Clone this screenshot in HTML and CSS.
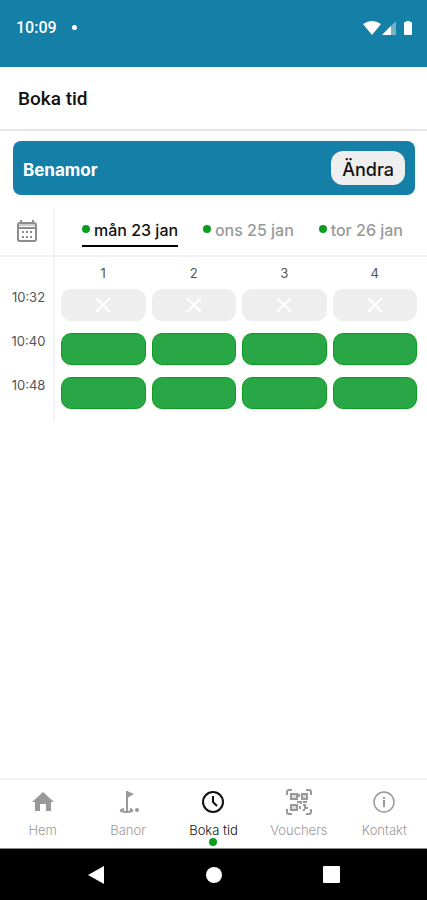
FILE: index.html
```html
<!DOCTYPE html>
<html lang="sv">
<head>
    <meta charset="UTF-8">
    <meta name="viewport" content="width=device-width, initial-scale=1.0">
    <title>Boka tid</title>
    <link rel="stylesheet" href="styles.css">
</head>
<body>
    <div class="status-bar">
        <span class="clock">10:09</span>
        <span class="notification-dot"></span>
        <svg class="status-icons" width="50" height="16" viewBox="0 0 50 16" fill="#fff" aria-hidden="true">
            <path d="M0 4Q9-2 18 4L9 15z"/>
            <path d="M33 1V15H19z" opacity="0.4"/>
            <path d="M28 6V15H19z"/>
            <path d="M43 1h4v1h1q1 0 1 1v11q0 1-1 1h-6q-1 0-1-1V3q0-1 1-1h1z"/>
        </svg>
    </div>

    <header class="title-bar">
        <h1>Boka tid</h1>
    </header>

    <main>
        <section class="course-card">
            <h2>Benamor</h2>
            <button type="button" class="change-button">Ändra</button>
        </section>

        <div class="date-bar">
            <button type="button" class="calendar-button" aria-label="Välj datum">
                <svg width="22" height="24" viewBox="0 0 22 24" fill="none" stroke="#8c8c8c" stroke-width="2">
                    <rect x="2" y="4" width="18" height="18" rx="2"/>
                    <path d="M3 6h16" stroke="#ccc"/>
                    <path d="M2 9h18"/>
                    <path d="M5 1v4M17 1v4"/>
                    <path d="M6 13h2m2 0h2m2 0h2M6 18h2m2 0h2m2 0h2"/>
                </svg>
            </button>
            <nav class="dates">
                <a href="#" class="date active">mån 23 jan</a>
                <a href="#" class="date">ons 25 jan</a>
                <a href="#" class="date">tor 26 jan</a>
            </nav>
        </div>

        <table class="tee-times">
            <thead>
                <tr><td class="time"></td><th>1</th><th>2</th><th>3</th><th>4</th></tr>
            </thead>
            <tbody>
                <tr>
                    <th class="time">10:32</th>
                    <td><button type="button" class="slot" disabled aria-label="10:32 plats 1"><svg width="16" height="16" viewBox="0 0 16 16"><path d="M1 1l14 14M15 1L1 15"/></svg></button></td>
                    <td><button type="button" class="slot" disabled aria-label="10:32 plats 2"><svg width="16" height="16" viewBox="0 0 16 16"><path d="M1 1l14 14M15 1L1 15"/></svg></button></td>
                    <td><button type="button" class="slot" disabled aria-label="10:32 plats 3"><svg width="16" height="16" viewBox="0 0 16 16"><path d="M1 1l14 14M15 1L1 15"/></svg></button></td>
                    <td><button type="button" class="slot" disabled aria-label="10:32 plats 4"><svg width="16" height="16" viewBox="0 0 16 16"><path d="M1 1l14 14M15 1L1 15"/></svg></button></td>
                </tr>
                <tr>
                    <th class="time">10:40</th>
                    <td><button type="button" class="slot" aria-label="10:40 plats 1"></button></td>
                    <td><button type="button" class="slot" aria-label="10:40 plats 2"></button></td>
                    <td><button type="button" class="slot" aria-label="10:40 plats 3"></button></td>
                    <td><button type="button" class="slot" aria-label="10:40 plats 4"></button></td>
                </tr>
                <tr>
                    <th class="time">10:48</th>
                    <td><button type="button" class="slot" aria-label="10:48 plats 1"></button></td>
                    <td><button type="button" class="slot" aria-label="10:48 plats 2"></button></td>
                    <td><button type="button" class="slot" aria-label="10:48 plats 3"></button></td>
                    <td><button type="button" class="slot" aria-label="10:48 plats 4"></button></td>
                </tr>
            </tbody>
        </table>
    </main>

    <nav class="tab-bar">
        <a href="#" class="tab">
            <svg width="28" height="28" viewBox="0 0 28 28" fill="currentColor"><path d="M14 4l11 10h-3v9h-5v-7h-6v7H6v-9H3z"/></svg>
            Hem
        </a>
        <a href="#" class="tab">
            <svg width="28" height="28" viewBox="0 0 28 28" fill="none" stroke="currentColor" stroke-width="2"><path d="M13 23V3"/><path d="M13 3l7 3-7 4z" fill="currentColor" stroke="none"/><path d="M10 21q-4 1-3 2 6 2 11 0 1-1-2-2"/><circle cx="23" cy="22" r="2" fill="currentColor" stroke="none"/></svg>
            Banor
        </a>
        <a href="#" class="tab active">
            <svg width="28" height="28" viewBox="0 0 28 28" fill="none" stroke="currentColor" stroke-width="2"><circle cx="14" cy="14" r="10"/><path d="M14 8v6l4 4"/></svg>
            Boka tid
        </a>
        <a href="#" class="tab">
            <svg width="28" height="28" viewBox="0 0 28 28" fill="none" stroke="currentColor" stroke-width="2">
                <path d="M2 7V4q0-2 2-2h3M21 2h3q2 0 2 2v3M26 21v3q0 2-2 2h-3M7 26H4q-2 0-2-2v-3"/>
                <path d="M6 6h6v5H6zM17 6h5v5h-5zM6 17h6v5H6z" fill="#ddd"/>
                <path d="M14 6v3M12 14h4v2M18 14h4M15 18v3M18 17h2v3h3M18 22h2"/>
            </svg>
            Vouchers
        </a>
        <a href="#" class="tab">
            <svg width="28" height="28" viewBox="0 0 28 28" fill="none" stroke="currentColor" stroke-width="1.5"><circle cx="14" cy="14" r="10"/><path d="M14 12v7M14 9v2" stroke-width="2"/></svg>
            Kontakt
        </a>
    </nav>

    <div class="system-bar">
        <button type="button" aria-label="Tillbaka"><svg width="18" height="20" viewBox="0 0 18 20"><path d="M17 1v18L1 10z"/></svg></button>
        <button type="button" aria-label="Hem"><svg width="18" height="18" viewBox="0 0 18 18"><circle cx="9" cy="9" r="8"/></svg></button>
        <button type="button" aria-label="Översikt"><svg width="18" height="18" viewBox="0 0 18 18"><rect width="17" height="17" rx="1"/></svg></button>
    </div>
</body>
</html>
```
FILE: styles.css
```css
* {
    box-sizing: border-box;
}
body {
    margin: 0;
    min-height: 100vh;
    display: flex;
    flex-direction: column;
    background-color: #fff;
    font-family: Inter, "Liberation Sans", sans-serif;
}
button {
    border: none;
    padding: 0;
    background: none;
    font-family: inherit;
    cursor: pointer;
}
a {
    text-decoration: none;
}
svg {
    display: block;
}

/* Top */
.status-bar {
    display: flex;
    align-items: center;
    height: 67px;
    padding: 0 14px 12px 16px;
    background-color: #147fa7;
    color: #fff;
}
.clock {
    font: 500 16px Roboto, sans-serif;
}
.notification-dot {
    width: 5px;
    height: 5px;
    margin-left: 15px;
    border-radius: 50%;
    background-color: #fff;
}
.status-icons {
    margin-left: auto;
}
.title-bar {
    display: flex;
    align-items: center;
    height: 64px;
    padding: 0 18px;
    border-bottom: 2px solid #e6e6e6;
}
.title-bar h1 {
    margin: 0;
    color: #111;
    font: 500 19px Roboto, sans-serif;
}

main {
    flex: 1;
}
.course-card {
    display: flex;
    align-items: center;
    justify-content: space-between;
    height: 54px;
    margin: 10px 12px 12px 13px;
    padding: 0 10px;
    border-radius: 8px;
    background-color: #147fa7;
}
.course-card h2 {
    margin: 0;
    padding-top: 4px;
    color: #fff;
    font-size: 17px;
    font-weight: 700;
}
.change-button {
    height: 34px;
    padding: 2px 11px 0;
    border-radius: 12px;
    background-color: #eee;
    color: #111;
    font-size: 18px;
    font-weight: 500;
}

/* Date picker */
.date-bar {
    display: flex;
    height: 50px;
    border-bottom: 2px solid #f3f3f3;
}
.calendar-button {
    display: flex;
    align-items: center;
    justify-content: center;
    width: 55px;
    border-right: 2px solid #f3f3f3;
}
.dates {
    display: flex;
    flex: 1;
    align-items: center;
    justify-content: space-between;
    padding: 0 24px 0 27px;
}
.date {
    display: flex;
    align-items: center;
    gap: 4px;
    height: 32px;
    border-bottom: 2px solid transparent;
    color: #999;
    font-size: 16px;
    font-weight: 500;
    white-space: nowrap;
}
.date::before {
    content: "";
    width: 8px;
    height: 8px;
    margin-bottom: 3px;
    border-radius: 50%;
    background-color: #0a9e20;
}
.date.active {
    border-color: #000;
    color: #111;
}

/* Tee times */
.tee-times,
.tee-times thead,
.tee-times tbody {
    display: block;
}
.tee-times tr {
    display: grid;
    grid-template-columns: 55px repeat(4, 1fr);
    column-gap: 6px;
    padding-right: 10px;
}
.tee-times th,
.tee-times td {
    padding: 0;
    color: #555;
    font-size: 13px;
    font-weight: 400;
    line-height: 16px;
}
.tee-times thead th {
    height: 32px;
    padding-top: 8px;
}
.tee-times tbody tr {
    height: 44px;
}
.tee-times .time {
    padding-left: 4px;
    border-right: 2px solid #f3f3f3;
}
.slot {
    display: flex;
    align-items: center;
    justify-content: center;
    width: 100%;
    height: 32px;
    border: 1px solid #0a9e20;
    border-radius: 10px;
    background-color: #29a746;
}
.slot:disabled {
    border-color: #eee;
    background-color: #eee;
    cursor: default;
}
.slot svg {
    stroke: #fff;
    stroke-width: 2;
}

/* Bottom */
.tab-bar {
    display: grid;
    grid-template-columns: repeat(5, 1fr);
    height: 71px;
    border-top: 2px solid #f3f3f3;
    border-bottom: 1px solid #888;
}
.tab {
    position: relative;
    display: flex;
    flex-direction: column;
    align-items: center;
    gap: 6px;
    padding-top: 8px;
    color: #999;
    font-size: 13px;
    font-weight: 300;
    line-height: 16px;
    white-space: nowrap;
}
.tab.active {
    color: #111;
}
.tab.active::after {
    content: "";
    position: absolute;
    bottom: 2px;
    width: 8px;
    height: 8px;
    border-radius: 50%;
    background-color: #0a9e20;
}
.system-bar {
    display: flex;
    align-items: center;
    justify-content: center;
    gap: 100px;
    height: 51px;
    background-color: #000;
}
.system-bar svg {
    fill: #fff;
}
```
